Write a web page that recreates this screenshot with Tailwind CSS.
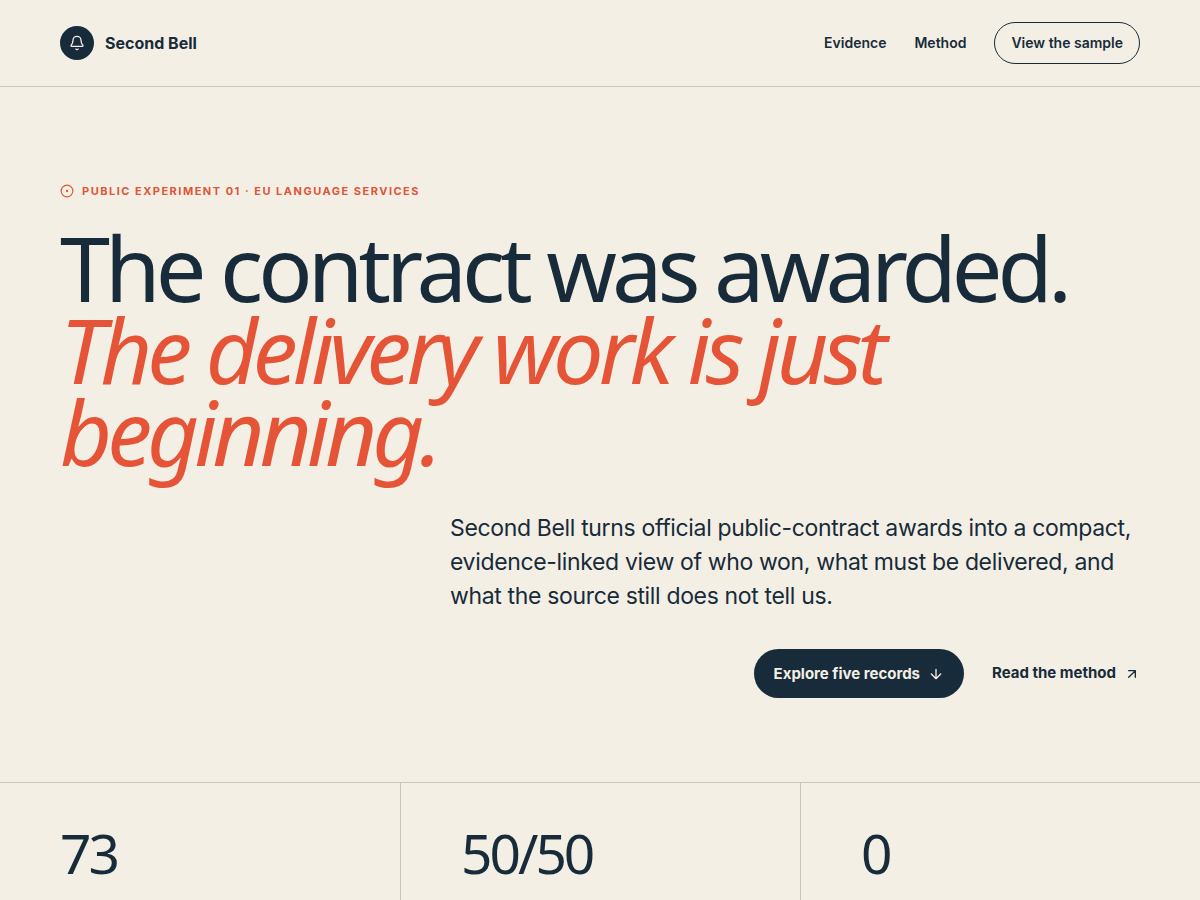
<!DOCTYPE html>
<html lang="en">
<head>
<meta charset="utf-8">
<meta name="viewport" content="width=device-width, initial-scale=1">
<title>Second Bell</title>
<script src="https://cdn.jsdelivr.net/npm/@tailwindcss/browser@4"></script>
</head>
<body class="min-h-screen overflow-x-hidden bg-[#f4efe4] font-['Inter',sans-serif] text-[#172b3a]">
<header class="border-b border-[#c9c5b9]">
  <div class="flex items-center justify-between px-[60px] py-[22px]">
    <a href="#top" class="flex items-center gap-[11px] text-base font-bold">
      <span class="grid size-[34px] place-items-center rounded-full bg-[#172b3a] text-[#f4efe4]">
        <svg class="size-4" viewBox="0 0 24 24" fill="none" stroke="currentColor" stroke-width="2" stroke-linecap="round" stroke-linejoin="round" aria-hidden="true"><path d="M10.268 21a2 2 0 0 0 3.464 0"/><path d="M3.262 15.326A1 1 0 0 0 4 17h16a1 1 0 0 0 .74-1.673C19.410 13.956 18 12.499 18 8A6 6 0 0 0 6 8c0 4.499-1.411 5.956-2.738 7.326"/></svg>
      </span>
      Second Bell
    </a>
    <nav class="flex items-center gap-7 text-sm font-semibold" aria-label="Main">
      <a href="#evidence">Evidence</a>
      <a href="#method">Method</a>
      <a href="#sample" class="rounded-full border border-[#172b3a] px-4 py-[10px] leading-5">View the sample</a>
    </nav>
  </div>
</header>
<main id="top">
  <section class="px-[60px] pt-24 pb-[84px]">
    <p class="flex items-center gap-2 text-[11px] leading-4 font-bold tracking-[1.5px] text-[#de5539] uppercase">
      <svg class="size-[14px]" viewBox="0 0 24 24" fill="none" stroke="currentColor" stroke-width="2" aria-hidden="true"><circle cx="12" cy="12" r="10"/><circle cx="12" cy="12" r="1"/></svg>
      Public experiment 01 · EU language services
    </p>
    <h1 class="mt-[27px] font-['Noto_Sans',sans-serif] text-[90px] leading-[82px] font-normal tracking-[-0.055em]">
      The contract was awarded.
      <em class="block text-[#e65437]">The delivery work is just beginning.</em>
    </h1>
    <p class="mt-[39px] ml-auto max-w-[690px] text-[23px] leading-[34px] tracking-[-0.015em]">Second Bell turns official public-contract awards into a compact, evidence-linked view of who won, what must be delivered, and what the source still does not tell us.</p>
    <div class="mt-9 flex items-center justify-end gap-7 text-[15px] font-bold">
      <a href="#evidence" class="flex items-center gap-2 rounded-full bg-[#172b3a] px-5 py-[14px] leading-[21px] text-[#f4efe4]">Explore five records
        <svg class="size-4" viewBox="0 0 24 24" fill="none" stroke="currentColor" stroke-width="2" stroke-linecap="round" stroke-linejoin="round" aria-hidden="true"><path d="M12 5v14M5 12l7 7 7-7"/></svg>
      </a>
      <a href="#method" class="flex items-center gap-2">Read the method
        <svg class="size-4" viewBox="0 0 24 24" fill="none" stroke="currentColor" stroke-width="2" stroke-linecap="round" stroke-linejoin="round" aria-hidden="true"><path d="M7 7h10v10M7 17 17 7"/></svg>
      </a>
    </div>
  </section>
  <section id="evidence" class="grid grid-cols-3 border-t border-[#c9c5b9] font-['Noto_Sans',sans-serif] text-[55px] leading-[54px] tracking-[-3px]" aria-label="Key figures">
    <p class="px-[60px] pt-[43px] pb-5">73</p>
    <p class="border-l border-[#c9c5b9] px-[60px] pt-[43px] pb-5">50/50</p>
    <p class="border-l border-[#c9c5b9] px-[60px] pt-[43px] pb-5">0</p>
  </section>
</main>
</body>
</html>
